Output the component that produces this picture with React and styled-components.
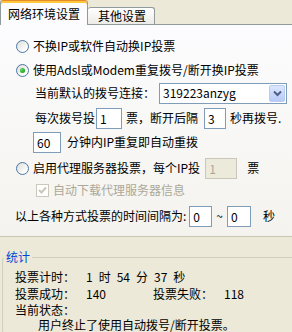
import React from 'react';
import styled, { createGlobalStyle } from 'styled-components';

const GlobalStyle = createGlobalStyle`
  body {
    margin: 0;
    background: #ece9d8;
    font-family: "Noto Sans CJK SC", "Liberation Sans", sans-serif;
    font-size: 12px;
    color: #000;
    overflow: hidden;
  }
`;

const Window = styled.div`
  width: 292px;
  height: 332px;
  overflow: hidden;
`;

const Tabs = styled.div`
  display: flex;
  align-items: flex-end;
  height: 24px;
  border-bottom: 1px solid #919b9c;
`;

const Tab = styled.div`
  box-sizing: border-box;
  display: flex;
  align-items: center;
  height: ${(p) => (p.$active ? 25 : 17)}px;
  margin-bottom: ${(p) => (p.$active ? -1 : 0)}px;
  padding: ${(p) => (p.$active ? '1px 7px 0 7px' : '0 8px 0 10px')};
  border: 1px solid #919b9c;
  border-bottom: none;
  border-left: ${(p) => (p.$active ? '1px solid #919b9c' : 'none')};
  border-top: 1px solid ${(p) => (p.$active ? '#e68b2c' : '#919b9c')};
  border-radius: 3px 3px 0 0;
  background: ${(p) =>
    p.$active ? '#fcfcfe' : 'linear-gradient(#ffffff, #ecebe6)'};
  box-shadow: ${(p) => (p.$active ? 'inset 0 2px 0 #ffc83c' : 'none')};
  line-height: 16px;
  white-space: nowrap;
`;

const Panel = styled.div`
  display: flex;
  flex-direction: column;
  padding: 9px 0 8px;
  background: linear-gradient(#fcfcfe, #f4f3ee);
  border-bottom: 1px solid #c9c6b6;
`;

const Row = styled.div`
  display: flex;
  align-items: center;
  height: ${(p) => p.$h || 24}px;
  margin-top: ${(p) => p.$mt || 0}px;
  padding-left: ${(p) => p.$indent || 16}px;
  white-space: nowrap;
  line-height: 16px;
`;

const Radio = styled.span`
  box-sizing: border-box;
  display: flex;
  align-items: center;
  justify-content: center;
  flex: none;
  width: 13px;
  height: 13px;
  margin-right: 4px;
  border-radius: 50%;
  border: 1px solid #4a76a6;
  background: linear-gradient(135deg, #dcdcd7, #ffffff 80%);

  &::after {
    content: '';
    display: ${(p) => (p.$checked ? 'block' : 'none')};
    width: 5px;
    height: 5px;
    border-radius: 50%;
    background: radial-gradient(circle at 35% 35%, #5ee05e, #21a121 70%);
  }
`;

const Check = styled.span`
  box-sizing: border-box;
  display: flex;
  align-items: center;
  justify-content: center;
  flex: none;
  width: 13px;
  height: 13px;
  margin: 0 4px 0 1px;
  border: 1px solid #cac8bb;
  background: #fff;
`;

const Muted = styled.span`
  color: ${(p) => (p.$disabled ? '#aca899' : 'inherit')};
`;

const Field = styled.input`
  box-sizing: border-box;
  flex: none;
  width: ${(p) => p.$w}px;
  height: 21px;
  margin: 0 ${(p) => p.$mr || 0}px 0 ${(p) => p.$ml || 0}px;
  padding: 0 0 0 3px;
  border: 1px solid ${(p) => (p.disabled ? '#c9c7ba' : '#7f9db9')};
  background: ${(p) => (p.disabled ? '#ebeadb' : '#fff')};
  color: ${(p) => (p.disabled ? '#aca899' : '#000')};
  font: inherit;
  line-height: 19px;
  outline: none;
`;

const Select = styled.div`
  box-sizing: border-box;
  display: flex;
  align-items: center;
  justify-content: space-between;
  width: 128px;
  height: 21px;
  margin-left: 4px;
  padding: 0 1px 0 3px;
  border: 1px solid #7f9db9;
  background: #fff;
`;

const DropButton = styled.span`
  box-sizing: border-box;
  display: flex;
  align-items: center;
  justify-content: center;
  width: 16px;
  height: 17px;
  border: 1px solid #b9cdf4;
  border-radius: 2px;
  background: linear-gradient(#dce7fd, #b7cbf8);
`;

const Gap = styled.span`
  margin-left: ${(p) => p.$w}px;
`;

const Stats = styled.fieldset`
  margin: 12px -20px 0 2px;
  padding: 3px 0 0 12px;
  border: 1px solid #d0d0bf;
  border-radius: 3px;
`;

const Legend = styled.legend`
  margin-left: -11px;
  padding: 0 2px;
  color: #0046d5;
  line-height: 16px;
`;

const StatRow = styled.div`
  display: grid;
  grid-template-columns: 71px 67px 71px auto;
  height: ${(p) => p.$h || 17}px;
  line-height: ${(p) => p.$h || 17}px;
  white-space: nowrap;
`;

const Status = styled.div`
  height: 16px;
  line-height: 16px;
  padding-left: 23px;
  white-space: nowrap;
`;

const Time = styled.span`
  display: flex;
  gap: 6px;
`;

const Chevron = () => (
  <svg width="9" height="7" viewBox="0 0 9 7">
    <path d="M1 1.5 L4.5 5 L8 1.5" fill="none" stroke="#4d6185" strokeWidth="2" />
  </svg>
);

const Tick = () => (
  <svg width="9" height="9" viewBox="0 0 9 9">
    <path d="M1 4 L3.5 6.5 L8 1.5" fill="none" stroke="#cac8bb" strokeWidth="2" />
  </svg>
);

export default function App() {
  return (
    <Window>
      <GlobalStyle />
      <Tabs>
        <Tab $active>网络环境设置</Tab>
        <Tab>其他设置</Tab>
      </Tabs>
      <Panel>
        <Row>
          <Radio />
          不换IP或软件自动换IP投票
        </Row>
        <Row>
          <Radio $checked />
          使用Adsl或Modem重复拨号/断开换IP投票
        </Row>
        <Row $h={22} $indent={35}>
          当前默认的拨号连接：
          <Select>
            <span>319223anzyg</span>
            <DropButton>
              <Chevron />
            </DropButton>
          </Select>
        </Row>
        <Row $mt={2} $indent={35}>
          每次拨号投
          <Field $w={26} $ml={1} $mr={4} readOnly value="1" />
          票，断开后隔
          <Field $w={22} $ml={6} $mr={4} readOnly value="3" />
          秒再拨号.
        </Row>
        <Row $indent={33}>
          <Field $w={28} $mr={6} readOnly value="60" />
          分钟内IP重复即自动重拨
        </Row>
        <Row $mt={2}>
          <Radio />
          启用代理服务器投票，每个IP投
          <Field $w={32} $ml={5} $mr={10} disabled value="1" readOnly />
          票
        </Row>
        <Row $h={20} $indent={35}>
          <Check>
            <Tick />
          </Check>
          <Muted $disabled>自动下载代理服务器信息</Muted>
        </Row>
        <Row $mt={4} $indent={15}>
          以上各种方式投票的时间间隔为:
          <Field $w={23} $ml={3} $mr={4} readOnly value="0" />
          ~
          <Field $w={24} $ml={4} readOnly value="0" />
          <Gap $w={12}>秒</Gap>
        </Row>
      </Panel>
      <Stats>
        <Legend>统计</Legend>
        <StatRow>
          <span>投票计时：</span>
          <Time>
            <span>1</span>
            <span>时</span>
            <span>54</span>
            <span>分</span>
            <span>37</span>
            <span>秒</span>
          </Time>
        </StatRow>
        <StatRow>
          <span>投票成功：</span>
          <span>140</span>
          <span>投票失败：</span>
          <span>118</span>
        </StatRow>
        <StatRow $h={15}>
          <span>当前状态：</span>
        </StatRow>
        <Status>用户终止了使用自动拨号/断开投票。</Status>
      </Stats>
    </Window>
  );
}
